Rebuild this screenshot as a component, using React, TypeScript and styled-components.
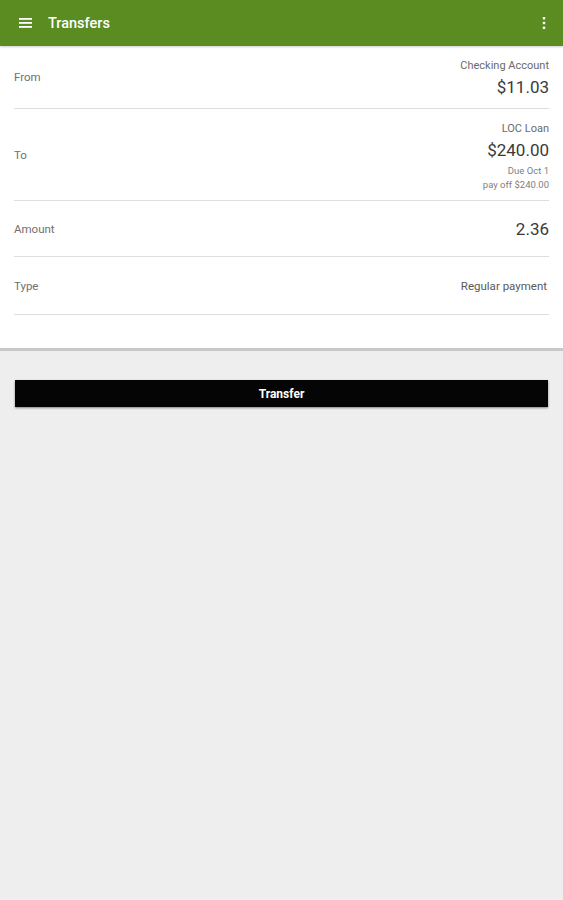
import React from "react";
import styled, { createGlobalStyle } from "styled-components";

const Global = createGlobalStyle`
  *, *::before, *::after { box-sizing: border-box; }
  html, body {
    margin: 0;
    padding: 0;
    background: #eeeeee;
    font-family: Roboto, "Liberation Sans", sans-serif;
  }
`;

const Page = styled.div`
  width: 563px;
  min-height: 900px;
  background: #eeeeee;
`;

const Toolbar = styled.div`
  height: 46px;
  background: #5b8c21;
  display: flex;
  align-items: center;
  padding: 0 0 0 19px;
  box-shadow: 0 1px 2px rgba(0, 0, 0, 0.2);
  position: relative;
`;

const Title = styled.div`
  color: #ffffff;
  font-size: 14.5px;
  font-weight: 500;
  margin-left: 15px;
  flex: 1;
`;

const MenuButton = styled.div`
  width: 38px;
  display: flex;
  justify-content: center;
`;

const Panel = styled.div`
  background: #ffffff;
  padding: 0 14px 33px 14px;
  border-bottom: 3px solid #c8c8c8;
`;

const Row = styled.div<{ $h: number }>`
  height: ${(p) => p.$h}px;
  display: flex;
  align-items: center;
  justify-content: space-between;
  border-bottom: 1.5px solid #dedede;
`;

const Label = styled.div`
  font-size: 11.5px;
  color: #707070;
`;

const Values = styled.div`
  display: flex;
  flex-direction: column;
  align-items: flex-end;
  text-align: right;
  padding-top: 4px;
`;

const Caption = styled.div`
  font-size: 11px;
  color: #6a6a6a;
  line-height: 15px;
`;

const Big = styled.div`
  font-size: 17px;
  color: #3a3a3a;
  line-height: 28px;
`;

const Small = styled.div`
  font-size: 9.5px;
  color: #808080;
  line-height: 14px;
`;

const Plain = styled.div`
  font-size: 11.5px;
  color: #5a5a5a;
  margin-right: 2px;
`;

const ButtonWrap = styled.div`
  padding: 29px 15px 0 15px;
`;

const TransferButton = styled.div`
  height: 27px;
  background: #050505;
  color: #ffffff;
  font-size: 12px;
  font-weight: 700;
  display: flex;
  align-items: center;
  justify-content: center;
  box-shadow: 0 1px 2px rgba(0, 0, 0, 0.45);
`;

const Hamburger = () => (
  <svg width="14" height="12" viewBox="0 0 14 12">
    <rect x="0" y="1" width="13" height="1.8" fill="#fff" />
    <rect x="0" y="5" width="13" height="1.8" fill="#fff" />
    <rect x="0" y="9" width="13" height="1.8" fill="#fff" />
  </svg>
);

const Dots = () => (
  <svg width="4" height="12" viewBox="0 0 4 12">
    <rect x="0.8" y="0" width="2.4" height="2.4" fill="#fff" />
    <rect x="0.8" y="4.8" width="2.4" height="2.4" fill="#fff" />
    <rect x="0.8" y="9.6" width="2.4" height="2.4" fill="#fff" />
  </svg>
);

export default function App() {
  return (
    <Page>
      <Global />
      <Toolbar>
        <Hamburger />
        <Title>Transfers</Title>
        <MenuButton>
          <Dots />
        </MenuButton>
      </Toolbar>
      <Panel>
        <Row $h={63}>
          <Label>From</Label>
          <Values>
            <Caption>Checking Account</Caption>
            <Big>$11.03</Big>
          </Values>
        </Row>
        <Row $h={92}>
          <Label>To</Label>
          <Values>
            <Caption>LOC Loan</Caption>
            <Big>$240.00</Big>
            <Small>Due Oct 1</Small>
            <Small>pay off $240.00</Small>
          </Values>
        </Row>
        <Row $h={56}>
          <Label>Amount</Label>
          <Big>2.36</Big>
        </Row>
        <Row $h={58}>
          <Label>Type</Label>
          <Plain>Regular payment</Plain>
        </Row>
      </Panel>
      <ButtonWrap>
        <TransferButton>Transfer</TransferButton>
      </ButtonWrap>
    </Page>
  );
}
